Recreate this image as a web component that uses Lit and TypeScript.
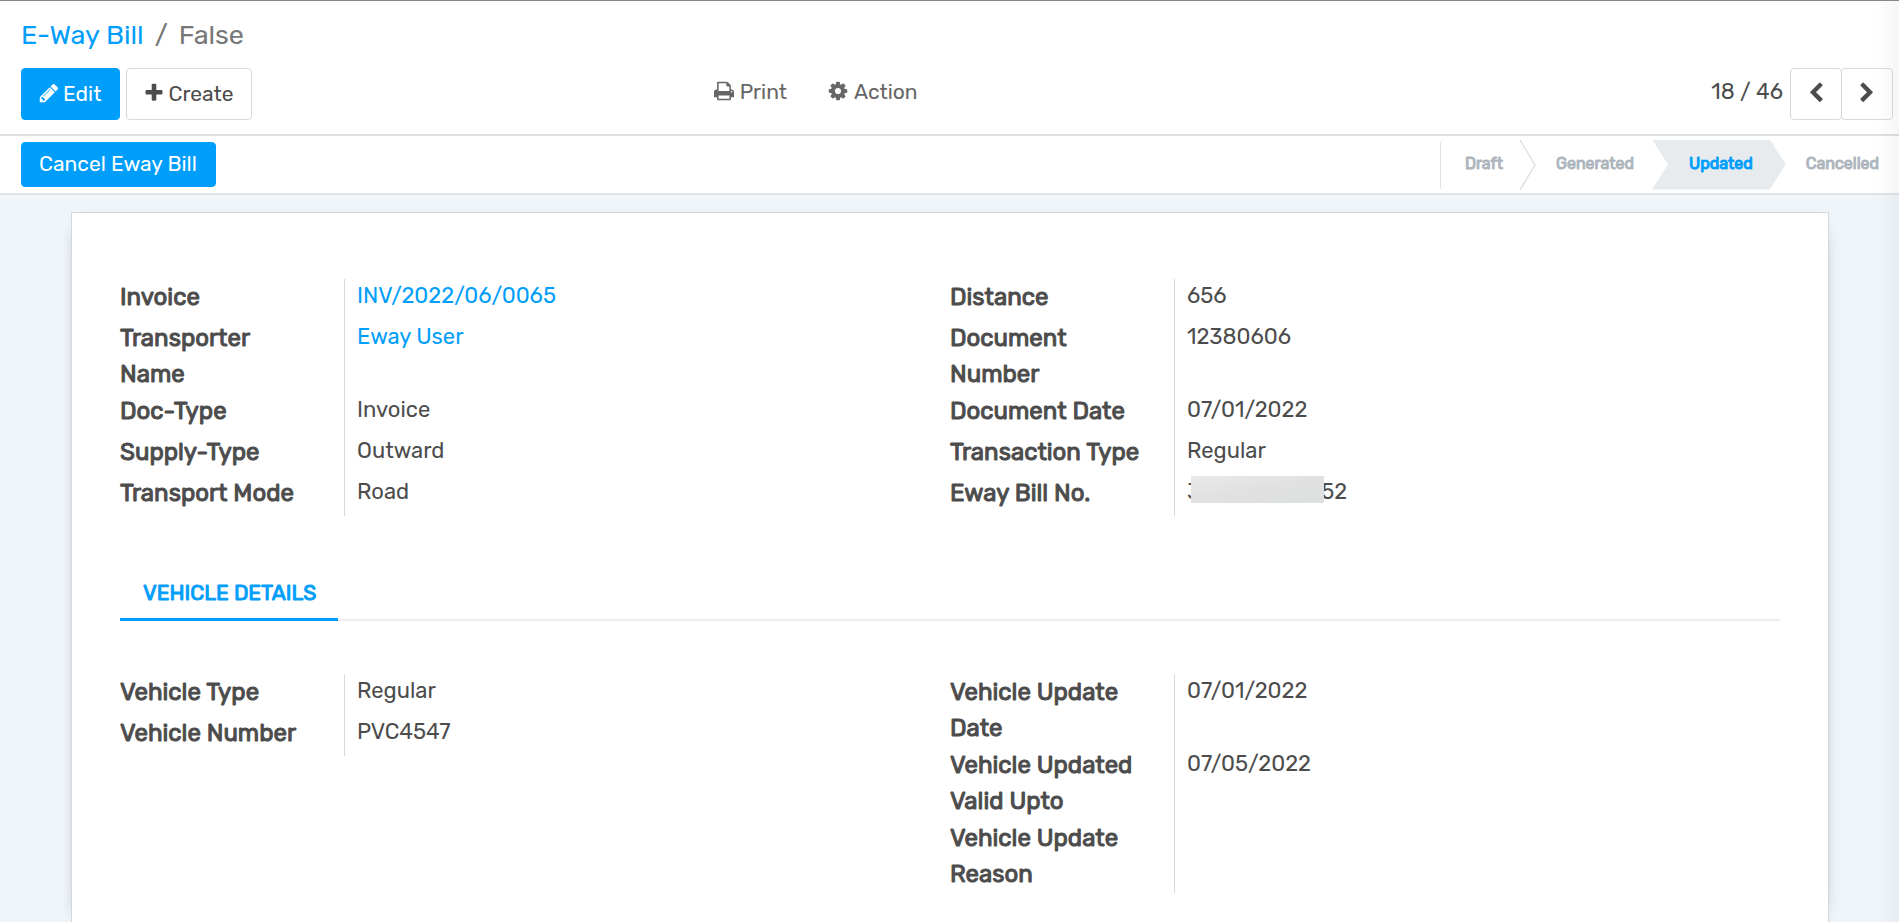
import { LitElement, html, css, svg, nothing } from "lit";
import { customElement, property } from "lit/decorators.js";

const ICONS: Record<string, string> = {
  pencil:
    "M491 1536l91-91-235-235-91 91v107h128v128h107zm523-928q0-22-22-22-10 0-17 7l-542 542q-7 7-7 17 0 22 22 22 10 0 17-7l542-542q7-7 7-17zm-54-192l416 416-832 832h-416v-416l832-832zm683 96q0 53-37 90l-166 166-416-416 166-165q36-38 90-38 53 0 91 38l235 234q37 39 37 91z",
  plus: "M1600 736v192q0 40-28 68t-68 28h-416v416q0 40-28 68t-68 28h-192q-40 0-68-28t-28-68v-416h-416q-40 0-68-28t-28-68v-192q0-40 28-68t68-28h416v-416q0-40 28-68t68-28h192q40 0 68 28t28 68v416h416q40 0 68 28t28 68z",
  print:
    "M448 1536h896v-256h-896v256zm0-640h896v-384h-160q-40 0-68-28t-28-68v-160h-640v640zm1152 64q0-26-19-45t-45-19-45 19-19 45 19 45 45 19 45-19 19-45zm128 0v416q0 13-9.5 22.5t-22.5 9.5h-224v160q0 40-28 68t-68 28h-960q-40 0-68-28t-28-68v-160h-224q-13 0-22.5-9.5t-9.5-22.5v-416q0-79 56.5-135.5t135.5-56.5h64v-544q0-40 28-68t68-28h672q40 0 88 20t76 48l152 152q28 28 48 76t20 88v256h64q79 0 135.5 56.5t56.5 135.5z",
  cog: "M1152 896q0-106-75-181t-181-75-181 75-75 181 75 181 181 75 181-75 75-181zm512-109v222q0 12-8 23t-20 13l-185 28q-19 54-39 91 35 50 107 138 10 12 10 25t-9 23q-27 37-99 108t-94 71q-12 0-26-9l-138-108q-44 23-91 38-16 136-29 186-7 28-36 28h-222q-14 0-24.5-8.5t-11.5-21.5l-28-184q-49-16-90-37l-141 107q-10 9-25 9-14 0-25-11-126-114-165-168-7-10-7-23 0-12 8-23 15-21 51-66.5t54-70.5q-27-50-41-99l-183-27q-13-2-21-12.5t-8-23.5v-222q0-12 8-23t19-13l186-28q14-46 39-92-40-57-107-138-10-12-10-24 0-10 9-23 26-36 98.5-107.5t94.5-71.5q13 0 26 10l138 107q44-23 91-38 16-136 29-186 7-28 36-28h222q14 0 24.5 8.5t11.5 21.5l28 184q49 16 90 37l142-107q9-9 24-9 13 0 25 10 129 119 165 170 7 8 7 22 0 12-8 23-15 21-51 66.5t-54 70.5q26 50 41 98l183 28q13 2 21 12.5t8 23.5z",
  left: "M1427 301l-531 531 531 531q19 19 19 45t-19 45l-166 166q-19 19-45 19t-45-19l-742-742q-19-19-19-45t19-45l742-742q19-19 45-19t45 19l166 166q19 19 19 45t-19 45z",
  right:
    "M1363 877l-742 742q-19 19-45 19t-45-19l-166-166q-19-19-19-45t19-45l531-531-531-531q-19-19-19-45t19-45l166-166q19-19 45-19t45 19l742 742q19 19 19 45t-19 45z",
};

const icon = (name: string) => html`<svg class="icon" viewBox="64 0 1664 1792" aria-hidden="true">
  ${svg`<path d=${ICONS[name]} fill="currentColor"></path>`}
</svg>`;

interface Field {
  label: string;
  value?: string;
  link?: boolean;
  masked?: [string, string];
}

const INVOICE_FIELDS: Field[] = [
  { label: "Invoice", value: "INV/2022/06/0065", link: true },
  { label: "Transporter Name", value: "Eway User", link: true },
  { label: "Doc-Type", value: "Invoice" },
  { label: "Supply-Type", value: "Outward" },
  { label: "Transport Mode", value: "Road" },
];
const DOCUMENT_FIELDS: Field[] = [
  { label: "Distance", value: "656" },
  { label: "Document Number", value: "12380606" },
  { label: "Document Date", value: "07/01/2022" },
  { label: "Transaction Type", value: "Regular" },
  { label: "Eway Bill No.", masked: ["3", "52"] },
];
const VEHICLE_FIELDS: Field[] = [
  { label: "Vehicle Type", value: "Regular" },
  { label: "Vehicle Number", value: "PVC4547" },
];
const UPDATE_FIELDS: Field[] = [
  { label: "Vehicle Update Date", value: "07/01/2022" },
  { label: "Vehicle Updated Valid Upto", value: "07/05/2022" },
  { label: "Vehicle Update Reason" },
];

@customElement("field-group")
export class FieldGroup extends LitElement {
  @property({ attribute: false }) fields: Field[] = [];

  static styles = css`
    :host {
      display: block;
    }
    .list {
      margin: 0;
    }
    .row {
      display: grid;
      grid-template-columns: 224px 1fr;
      min-height: 41px;
    }
    .label {
      padding: 0 26px 1px 0;
      font-size: 24px;
      font-weight: 400;
      -webkit-text-stroke: 1px currentColor;
      line-height: 36px;
    }
    .value {
      margin: 0;
      padding-left: 12px;
      border-left: 1px solid #d9d9d9;
      font-size: 22px;
      line-height: 34px;
    }
    .link {
      color: #009efb;
      text-decoration: none;
    }
    .masked {
      display: flex;
    }
    .mask {
      width: 133px;
      height: 27px;
      margin: 1px -3px 0 -9px;
      background: linear-gradient(170deg, #e9e9e9, #e1e1e1 50%, #dcdfe0 90%, #e2e3e4);
      position: relative;
    }
  `;

  private renderValue(field: Field) {
    if (field.masked) {
      return html`<span class="masked"
        ><span>${field.masked[0]}</span><span class="mask"></span><span>${field.masked[1]}</span></span
      >`;
    }
    if (field.link) return html`<a class="link" href="#">${field.value}</a>`;
    return field.value ?? nothing;
  }

  render() {
    return html`<dl class="list">
      ${this.fields.map(
        (field) => html`<div class="row">
          <dt class="label">${field.label}</dt>
          <dd class="value">${this.renderValue(field)}</dd>
        </div>`,
      )}
    </dl>`;
  }
}

@customElement("app-root")
export class AppRoot extends LitElement {
  static styles = css`
    :host {
      display: flex;
      flex-direction: column;
      min-height: 100vh;
      box-sizing: border-box;
      border-top: 1px solid #85878d;
      background: #f0f5fa;
      color: #4c4c4c;
      font-family: Rubik, Roboto, sans-serif;
      font-size: 21px;
      position: relative;
    }
    * {
      box-sizing: border-box;
    }
    button {
      font: inherit;
      color: inherit;
      cursor: pointer;
    }
    .icon {
      width: 20px;
      height: 22px;
      flex: none;
    }
    .panel {
      padding: 16px 6px 14px 21px;
      background: #fff;
      border-bottom: 2px solid #e0e0e0;
    }
    .crumbs {
      display: flex;
      gap: 11px;
      margin: 0 0 15px;
      padding: 0;
      list-style: none;
      font-size: 27px;
      line-height: 36px;
      color: #777;
    }
    .crumbs a {
      color: #009efb;
      text-decoration: none;
    }
    .tools {
      display: grid;
      grid-template-columns: 37% 1fr auto;
      align-items: center;
    }
    .buttons,
    .menus,
    .pager {
      display: flex;
      align-items: center;
    }
    .buttons {
      gap: 6px;
    }
    .menus {
      gap: 41px;
    }
    .btn {
      display: flex;
      align-items: center;
      gap: 4px;
      height: 52px;
      padding: 0 18px 2px 17px;
      border: 1px solid #d9d9d9;
      border-radius: 4px;
      background: #fff;
    }
    .primary {
      background: #009efb;
      border-color: #009efb;
      color: #fff;
    }
    .menu {
      display: flex;
      align-items: center;
      gap: 6px;
      padding: 0 0 6px;
      border: 0;
      background: none;
      color: #666;
    }
    .count {
      margin-right: 7px;
      padding-bottom: 5px;
      font-size: 22px;
    }
    .page {
      justify-content: center;
      width: 52px;
      padding: 0 0 2px;
    }
    .page + .page {
      margin-left: -1px;
    }
    .statusbar {
      display: flex;
      align-items: center;
      justify-content: space-between;
      height: 59px;
      padding: 0 2px 0 21px;
      background: #fff;
      border-bottom: 2px solid #dfe3e7;
    }
    .cancel {
      height: 45px;
    }
    .steps {
      display: flex;
      margin: 0;
      padding: 0;
      list-style: none;
      height: 50px;
      font-size: 16px;
      -webkit-text-stroke: 1px currentColor;
      line-height: 48px;
      color: #adb5bd;
    }
    .step {
      padding: 0 18px 0 20px;
    }
    .first {
      padding: 0 16px 0 24px;
      border-left: 1px solid #dee2e6;
      border-radius: 4px 0 0 4px;
    }
    .chevron {
      width: 17px;
      height: 50px;
      fill: none;
      stroke: #dee2e6;
      stroke-width: 1.5;
    }
    .current {
      padding: 0 33px 0 37px;
      background: #e7ebee;
      color: #009efb;
      clip-path: polygon(0 0, calc(100% - 16px) 0, 100% 50%, calc(100% - 16px) 100%, 0 100%, 16px 50%);
    }
    .sheet {
      flex: 1;
      margin: 17px 70px 0 71px;
      padding: 66px 48px 28px;
      background: #fff;
      border: 1px solid #d5d8db;
      border-bottom: 0;
      box-shadow: 0 5px 20px -15px #000;
    }
    .columns {
      display: grid;
      grid-template-columns: 1fr 1fr;
    }
    .tabs {
      display: flex;
      margin: 59px 0 53px;
      border-bottom: 2px solid #eee;
    }
    .tab {
      height: 46px;
      margin-bottom: -2px;
      padding: 0 22px 8px 23px;
      border: 0;
      border-bottom: 3px solid #009efb;
      background: none;
      color: #009efb;
      font-size: 21px;
      -webkit-text-stroke: 1px currentColor;
      text-transform: uppercase;
    }
    .edge {
      position: absolute;
      top: 0;
      right: 0;
      bottom: 0;
      width: 24px;
      background: linear-gradient(to right, rgba(0, 0, 0, 0), rgba(0, 0, 0, 0.035));
      pointer-events: none;
    }
  `;

  render() {
    return html`
      <header class="panel">
        <ol class="crumbs">
          <li><a href="#">E-Way Bill</a></li>
          <li aria-hidden="true">/</li>
          <li>False</li>
        </ol>
        <div class="tools">
          <div class="buttons">
            <button class="btn primary">${icon("pencil")}Edit</button>
            <button class="btn">${icon("plus")}Create</button>
          </div>
          <div class="menus">
            <button class="menu">${icon("print")}Print</button>
            <button class="menu">${icon("cog")}Action</button>
          </div>
          <div class="pager">
            <span class="count">18 / 46</span>
            <button class="btn page" aria-label="Previous">${icon("left")}</button>
            <button class="btn page" aria-label="Next">${icon("right")}</button>
          </div>
        </div>
      </header>
      <div class="statusbar">
        <button class="btn primary cancel">Cancel Eway Bill</button>
        <ol class="steps">
          <li class="step first">Draft</li>
          <svg class="chevron" viewBox="0 0 17 50" aria-hidden="true"><path d="M1 0L16 25L1 50"></path></svg>
          <li class="step">Generated</li>
          <li class="step current" aria-current="step">Updated</li>
          <li class="step">Cancelled</li>
        </ol>
      </div>
      <main class="sheet">
        <div class="columns">
          <field-group .fields=${INVOICE_FIELDS}></field-group>
          <field-group .fields=${DOCUMENT_FIELDS}></field-group>
        </div>
        <div class="tabs" role="tablist">
          <button class="tab" role="tab" aria-selected="true">Vehicle Details</button>
        </div>
        <div class="columns">
          <field-group .fields=${VEHICLE_FIELDS}></field-group>
          <field-group .fields=${UPDATE_FIELDS}></field-group>
        </div>
      </main>
      <div class="edge"></div>
    `;
  }
}
